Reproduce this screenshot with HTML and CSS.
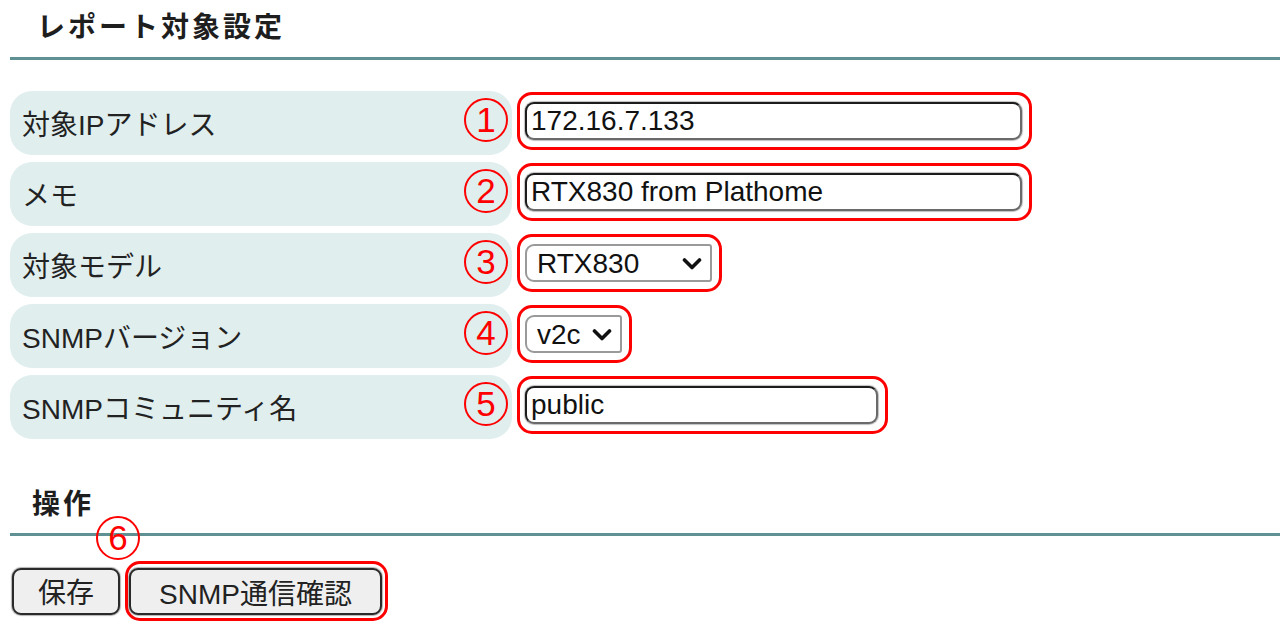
FILE: index.html
```html
<!DOCTYPE html>
<html lang="ja">
<head>
<meta charset="utf-8">
<title>レポート対象設定</title>
<link rel="stylesheet" href="styles.css">
</head>
<body>
<main class="page">
  <h2 class="section-title first">レポート対象設定</h2>
  <div class="form">
    <div class="row">
      <div class="label">対象IPアドレス</div>
      <div class="mark"><span class="num">1</span><input class="text w-ip" type="text" value="172.16.7.133"></div>
    </div>
    <div class="row">
      <div class="label">メモ</div>
      <div class="mark"><span class="num">2</span><input class="text w-ip" type="text" value="RTX830 from Plathome"></div>
    </div>
    <div class="row">
      <div class="label">対象モデル</div>
      <div class="mark"><span class="num">3</span>
        <span class="select-wrap">
          <select class="select w-model"><option>RTX830</option></select>
          <svg class="chev" viewBox="0 0 20 14" width="20" height="14"><polyline points="2.5,3 10,10.5 17.5,3" fill="none" stroke="#111" stroke-width="3.6" stroke-linecap="round" stroke-linejoin="round"/></svg>
        </span>
      </div>
    </div>
    <div class="row">
      <div class="label">SNMPバージョン</div>
      <div class="mark"><span class="num">4</span>
        <span class="select-wrap">
          <select class="select w-ver"><option>v2c</option></select>
          <svg class="chev" viewBox="0 0 20 14" width="20" height="14"><polyline points="2.5,3 10,10.5 17.5,3" fill="none" stroke="#111" stroke-width="3.6" stroke-linecap="round" stroke-linejoin="round"/></svg>
        </span>
      </div>
    </div>
    <div class="row">
      <div class="label">SNMPコミュニティ名</div>
      <div class="mark"><span class="num">5</span><input class="text w-comm" type="text" value="public"></div>
    </div>
  </div>

  <h2 class="section-title ops">操作</h2>
  <div class="actions">
    <button class="btn btn-save" type="button">保存</button>
    <div class="mark mark-btn"><span class="num num-top">6</span><button class="btn btn-snmp" type="button">SNMP通信確認</button></div>
  </div>
</main>
</body>
</html>
```

FILE: styles.css
```css
html, body {
  margin: 0;
  padding: 0;
  background: #ffffff;
}

body {
  font-family: "Liberation Sans", "Noto Sans CJK JP", sans-serif;
  color: #222222;
}

.page {
  padding-left: 10px;
}

.section-title {
  margin: 0;
  font-family: "Noto Sans CJK JP", sans-serif;
  font-weight: 700;
  font-size: 28px;
  line-height: 40px;
  letter-spacing: 3px;
  color: #1e1e1e;
  border-bottom: 3px solid #5f9094;
  padding-bottom: 12px;
}

.section-title.first {
  padding-top: 5px;
  padding-left: 27px;
}

.section-title.ops {
  margin-top: 43px;
  padding-bottom: 11px;
  padding-left: 22px;
}

.form {
  margin-top: 31px;
  display: flex;
  flex-direction: column;
  gap: 7px;
}

.row {
  display: flex;
  align-items: center;
  height: 64px;
}

.label {
  box-sizing: border-box;
  width: 502px;
  height: 100%;
  display: flex;
  align-items: center;
  padding-left: 12px;
  background: #e0eeee;
  border-radius: 22px;
  font-size: 28px;
  color: #222222;
}

.mark {
  position: relative;
  display: flex;
  align-items: center;
  margin-left: 5px;
  margin-bottom: 4px;
  border: 3px solid #ff0000;
  border-radius: 15px;
  padding: 7px 7px 7px 5px;
}

.num {
  position: absolute;
  left: -56px;
  top: calc(50% - 23px);
  box-sizing: border-box;
  width: 44px;
  height: 44px;
  border: 2px solid #ff0000;
  border-radius: 50%;
  display: flex;
  align-items: center;
  justify-content: center;
  font-family: "Liberation Sans", sans-serif;
  font-size: 35px;
  line-height: 40px;
  color: #ff0000;
}

.text {
  box-sizing: border-box;
  height: 38px;
  margin: 0;
  padding: 0 4px;
  border: 2px solid #1c1c1c;
  border-bottom-color: #6a6a6a;
  border-right-color: #6a6a6a;
  border-radius: 9px;
  box-shadow: 0 0 1px 1px rgba(0, 0, 0, 0.25);
  background: #ffffff;
  font-family: "Liberation Sans", sans-serif;
  font-size: 28px;
  color: #111111;
  outline: none;
}

.w-ip { width: 497px; }
.w-comm { width: 353px; }

.select-wrap {
  position: relative;
  display: inline-flex;
}

.select {
  box-sizing: border-box;
  height: 38px;
  margin: 0;
  -webkit-appearance: none;
  appearance: none;
  border: 2px solid #9a9a9a;
  border-radius: 9px 3px 3px 9px;
  background: #ffffff;
  padding: 0 0 0 10px;
  font-family: "Liberation Sans", sans-serif;
  font-size: 28px;
  color: #111111;
}

.w-model { width: 187px; }
.w-ver { width: 97px; }

.chev {
  position: absolute;
  right: 10px;
  top: 13px;
  pointer-events: none;
}

.actions {
  display: flex;
  align-items: center;
  margin-top: 25px;
}

.btn {
  box-sizing: border-box;
  height: 47px;
  margin: 0;
  border: 2px solid #2a2a2a;
  border-radius: 9px;
  background: #efefef;
  box-shadow: 0 0 1px 1px rgba(0, 0, 0, 0.3);
  font-family: "Liberation Sans", "Noto Sans CJK JP", sans-serif;
  font-size: 28px;
  color: #222222;
  padding: 0;
}

.btn-save {
  width: 108px;
  margin-left: 2px;
}

.btn-snmp {
  width: 253px;
}

.mark-btn {
  margin-left: 5px;
  margin-bottom: 0;
  padding: 4px 3px 3px 1px;
}

.num-top {
  left: -32px;
  top: -48px;
}
```
